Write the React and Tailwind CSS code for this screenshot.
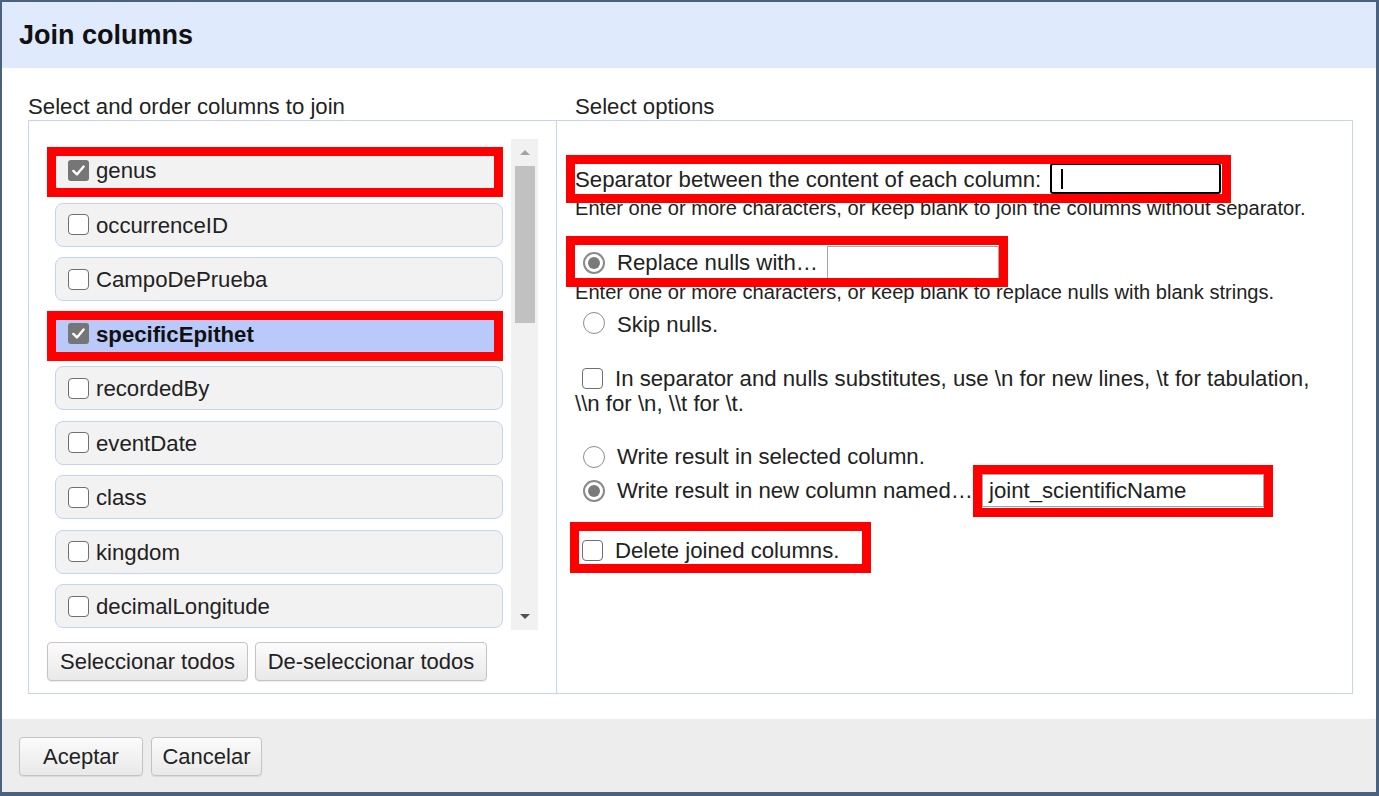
import React from 'react'

const columns = [
  { name: 'genus', checked: true, marked: true },
  { name: 'occurrenceID' },
  { name: 'CampoDePrueba' },
  { name: 'specificEpithet', checked: true, selected: true, marked: true },
  { name: 'recordedBy' },
  { name: 'eventDate' },
  { name: 'class' },
  { name: 'kingdom' },
  { name: 'decimalLongitude' },
]

function Checkbox({ checked }) {
  if (checked) {
    return (
      <span className="w-[21px] h-[21px] shrink-0 rounded-[3px] bg-[#767676] flex items-center justify-center">
        <svg width="15" height="15" viewBox="0 0 16 16" fill="none">
          <path d="M2.5 8.5 L6.3 12.2 L13.5 3.8" stroke="#fff" strokeWidth="2.6" strokeLinecap="round" strokeLinejoin="round" />
        </svg>
      </span>
    )
  }
  return <span className="w-[21px] h-[21px] shrink-0 rounded-[4px] border-[1.5px] border-[#6f6f6f] bg-white" />
}

function Radio({ checked }) {
  if (checked) {
    return (
      <span className="w-[22px] h-[22px] shrink-0 rounded-full border-2 border-[#8a8a8a] bg-white flex items-center justify-center">
        <span className="w-[12px] h-[12px] rounded-full bg-[#7a7a7a]" />
      </span>
    )
  }
  return <span className="w-[22px] h-[22px] shrink-0 rounded-full border-[1.5px] border-[#8d8d8d] bg-white" />
}

// red annotation box drawn over the screenshot
function Mark({ className }) {
  return <div className={'absolute z-10 border-[9px] border-[#ff0000] pointer-events-none ' + className} />
}

function Button({ children, className = '' }) {
  return (
    <button className={'h-[39px] whitespace-nowrap border border-[#c4c4c4] rounded-[4px] bg-linear-to-b from-[#fbfbfb] to-[#e9e9e9] shadow-[0_1px_1px_rgba(0,0,0,0.08)] text-[22px] text-[#222] leading-[26px] ' + className}>
      {children}
    </button>
  )
}

export default function App() {
  return (
    <div className="w-[1379px] h-[796px] overflow-hidden bg-white border-t-2 border-l-2 border-r-[3px] border-b-[4px] border-[#4b617e] flex flex-col font-['Liberation_Sans',Arial,sans-serif] text-[22.2px] text-[#222]">
      {/* Header */}
      <div className="h-[66px] shrink-0 bg-[#dfeafc] flex items-center pl-[17px] text-[27px] font-bold text-[#111]">
        Join columns
      </div>

      {/* Body */}
      <div className="h-[651px] shrink-0 pt-[26px] pl-[26px]">
        <div className="grid grid-cols-[528px_797px] h-[25px] leading-[25px] whitespace-nowrap">
          <div>Select and order columns to join</div>
          <div className="pl-[19px]">Select options</div>
        </div>

        <div className="mt-[1px] w-[1325px] h-[574px] border border-[#c6d3f1] flex">
          {/* Left cell — column list */}
          <div className="w-[528px] shrink-0 border-r border-[#c6d3f1] pt-[18px] pl-[16px]">
            <div className="flex h-[491px]">
              <div className="w-[466px] pl-[10px] pt-[9px] overflow-hidden">
                <div className="flex flex-col gap-[10.5px]">
                  {columns.map((c) => (
                    <div
                      key={c.name}
                      className={`relative shrink-0 h-[44px] w-[448px] rounded-[8px] border border-[#c4d2f4] flex items-center pl-[12px] gap-[7px] leading-none ${
                        c.selected ? 'bg-[#b9c9f9] font-bold text-[#111]' : 'bg-[#f2f2f2]'
                      }`}
                    >
                      <Checkbox checked={c.checked} />
                      <span className="pt-[3px]">{c.name}</span>
                      {c.marked && <Mark className="left-[-9px] right-[-1px] top-[-2px] bottom-[-6px]" />}
                    </div>
                  ))}
                </div>
              </div>
              {/* scrollbar */}
              <div className="w-[27px] h-full bg-[#f1f1f1] flex flex-col items-center">
                <div className="h-[27px] flex items-center justify-center">
                  <svg width="10" height="5" viewBox="0 0 10 5"><polygon points="0,5 5,0 10,5" fill="#a3a3a3" /></svg>
                </div>
                <div className="w-[20px] h-[157px] bg-[#c1c1c1]" />
                <div className="flex-1" />
                <div className="h-[27px] flex items-center justify-center">
                  <svg width="10" height="5" viewBox="0 0 10 5"><polygon points="0,0 10,0 5,5" fill="#505050" /></svg>
                </div>
              </div>
            </div>
            <div className="mt-[12px] ml-[2px] flex gap-[7px]">
              <Button className="w-[201px]">Seleccionar todos</Button>
              <Button className="w-[232px]">De-seleccionar todos</Button>
            </div>
          </div>

          {/* Right cell — options */}
          <div className="flex-1 pl-[18px] pt-[41px] leading-[25px] whitespace-nowrap">
            <div className="relative w-fit h-[33px] flex items-center gap-[9px]">
              <span className="pt-[2px]">Separator between the content of each column:</span>
              <div className="w-[171px] h-[31px] border-2 border-black rounded-[3px] bg-white flex items-center pl-[9px]">
                <span className="w-[1.5px] h-[20px] bg-black" />
              </div>
              <Mark className="left-[-9px] right-[-10px] top-[-7px] bottom-[-8px]" />
            </div>
            <div className="mt-[1px] h-[25px] text-[20.1px]">Enter one or more characters, or keep blank to join the columns without separator.</div>

            <div className="relative mt-[25px] ml-[8px] w-fit h-[33px] flex items-center">
              <Radio checked />
              <span className="ml-[12px]">Replace nulls with…</span>
              <div className="ml-[9px] w-[172px] h-[33px] border border-[#a6a6a6] bg-white" />
              <Mark className="left-[-17px] right-[-9px] top-[-10px] bottom-[-8px]" />
            </div>
            <div className="mt-[1px] h-[25px] text-[20.1px]">Enter one or more characters, or keep blank to replace nulls with blank strings.</div>
            <div className="mt-[5px] ml-[8px] h-[25px] flex items-center">
              <Radio />
              <span className="ml-[12px] pt-[3px]">Skip nulls.</span>
            </div>

            <div className="mt-[31px] ml-[7px] h-[25px] flex items-center">
              <Checkbox />
              <span className="ml-[12px]">In separator and nulls substitutes, use \n for new lines, \t for tabulation,</span>
            </div>
            <div className="h-[25px]">\\n for \n, \\t for \t.</div>

            <div className="mt-[28px] ml-[8px] h-[25px] flex items-center">
              <Radio />
              <span className="ml-[12px]">Write result in selected column.</span>
            </div>
            <div className="mt-[5px] ml-[8px] h-[33px] flex items-center">
              <Radio checked />
              <span className="ml-[12px]">Write result in new column named…</span>
              <div className="relative ml-[9px]">
                <div className="w-[282px] h-[33px] border border-[#a6a6a6] bg-white flex items-center pl-[6px]">
                  joint_scientificName
                </div>
                <Mark className="left-[-9px] right-[-9px] top-[-9px] bottom-[-10px]" />
              </div>
            </div>

            <div className="relative mt-[31px] ml-[7px] h-[25px] flex items-center">
              <Checkbox />
              <span className="ml-[12px]">Delete joined columns.</span>
              <Mark className="left-[-12px] w-[301px] top-[-16px] bottom-[-10px]" />
            </div>
          </div>
        </div>
      </div>

      {/* Footer */}
      <div className="flex-1 bg-[#ededed] pt-[18px] pl-[17px] flex items-start gap-[8px]">
        <Button className="w-[124px]">Aceptar</Button>
        <Button className="w-[111px]">Cancelar</Button>
      </div>
    </div>
  )
}
